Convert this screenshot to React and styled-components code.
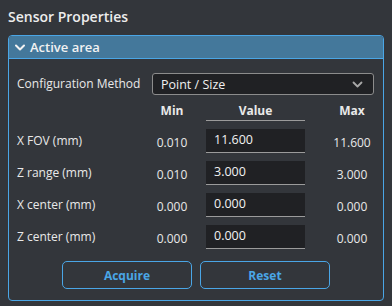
import React from 'react';
import styled, { createGlobalStyle } from 'styled-components';

const GlobalStyle = createGlobalStyle`
    html, body {
        margin: 0;
        padding: 0;
        background: #33363b;
    }
    body {
        font-family: "Open Sans", "Noto Sans", sans-serif;
        color: #e9e9e9;
    }
`;

const Page = styled.div`
    width: 392px;
    height: 306px;
    padding: 8px 8px 0 8px;
    box-sizing: border-box;
    background: #33363b;
`;

const Title = styled.h1`
    margin: 0;
    height: 27px;
    font-size: 14px;
    font-weight: 600;
    line-height: 18px;
    color: #ededed;
`;

const Panel = styled.section`
    width: 376px;
    height: 266px;
    box-sizing: border-box;
    border: 1px solid #4aa6e6;
    border-radius: 4px;
    overflow: hidden;
`;

const PanelHeader = styled.div`
    display: flex;
    align-items: center;
    gap: 5px;
    height: 22px;
    padding-left: 6px;
    background: #44789b;
    border-bottom: 1px solid #4aa6e6;
    font-size: 13px;
    font-weight: 600;
    color: #f2f2f2;
`;

const Body = styled.div`
    padding: 14px 0 0 8px;
`;

const ConfigRow = styled.div`
    display: flex;
    align-items: center;
    height: 22px;
`;

const Label = styled.div`
    flex: 0 0 135px;
    font-size: 12px;
    line-height: 16px;
`;

const Select = styled.div`
    display: flex;
    align-items: center;
    justify-content: space-between;
    flex: 0 0 222px;
    height: 22px;
    box-sizing: border-box;
    padding: 0 10px 0 8px;
    background: #202124;
    border: 1px solid #8c8c8c;
    border-radius: 3px;
    font-size: 12.5px;
    color: #f0f0f0;
`;

const Row = styled.div`
    display: flex;
    align-items: center;
    height: ${(p) => p.$height || 24}px;
    margin-top: ${(p) => p.$gap || 8}px;
`;

const MinCell = styled.div`
    flex: 0 0 40px;
    margin-right: 14px;
    text-align: center;
    font-size: 12px;
    font-weight: ${(p) => (p.$bold ? 700 : 400)};
    padding-top: ${(p) => (p.$bold ? 0 : 2)}px;
`;

const ValueHead = styled.div`
    flex: 0 0 99px;
    height: 20px;
    line-height: 22px;
    text-align: center;
    font-size: 12px;
    font-weight: 700;
    border-bottom: 1px solid #9b9b9b;
`;

const Input = styled.div`
    flex: 0 0 99px;
    height: 24px;
    box-sizing: border-box;
    padding: 0 8px;
    line-height: 22px;
    background: #202124;
    border-bottom: 1px solid #9b9b9b;
    font-size: 12.5px;
    color: #f2f2f2;
`;

const MaxCell = styled.div`
    flex: 0 0 60px;
    margin-left: 17px;
    text-align: center;
    font-size: 12px;
    font-weight: ${(p) => (p.$bold ? 700 : 400)};
    padding-top: ${(p) => (p.$bold ? 0 : 2)}px;
`;

const Buttons = styled.div`
    display: flex;
    gap: 8px;
    margin-top: 12px;
    padding-left: 45px;
`;

const Button = styled.button`
    width: 130px;
    height: 28px;
    background: transparent;
    border: 1px solid #4aa6e6;
    border-radius: 5px;
    color: #4aa6e6;
    font-family: "Open Sans", "Noto Sans", sans-serif;
    font-size: 12px;
    font-weight: 700;
    cursor: pointer;
`;

const Chevron = ({ color, width = 10, stroke = 2 }) => (
    <svg width={width} height="7" viewBox="0 0 10 7" fill="none">
        <path d="M1 1.5 L5 5.5 L9 1.5" stroke={color} strokeWidth={stroke} strokeLinecap="round" strokeLinejoin="round" />
    </svg>
);

const fields = [
    { label: 'X FOV (mm)', min: '0.010', value: '11.600', max: '11.600' },
    { label: 'Z range (mm)', min: '0.010', value: '3.000', max: '3.000' },
    { label: 'X center (mm)', min: '0.000', value: '0.000', max: '0.000' },
    { label: 'Z center (mm)', min: '0.000', value: '0.000', max: '0.000' },
];

const App = () => {
    return (
        <Page>
            <GlobalStyle />
            <Title>Sensor Properties</Title>
            <Panel>
                <PanelHeader>
                    <Chevron color="#f2f2f2" />
                    Active area
                </PanelHeader>
                <Body>
                    <ConfigRow>
                        <Label>Configuration Method</Label>
                        <Select>
                            Point / Size
                            <Chevron color="#a8a8a8" width={11} stroke={1.8} />
                        </Select>
                    </ConfigRow>
                    <Row $height={21} $gap={5}>
                        <Label />
                        <MinCell $bold>Min</MinCell>
                        <ValueHead>Value</ValueHead>
                        <MaxCell $bold>Max</MaxCell>
                    </Row>
                    {fields.map((f) => (
                        <Row key={f.label}>
                            <Label>{f.label}</Label>
                            <MinCell>{f.min}</MinCell>
                            <Input>{f.value}</Input>
                            <MaxCell>{f.max}</MaxCell>
                        </Row>
                    ))}
                    <Buttons>
                        <Button>Acquire</Button>
                        <Button>Reset</Button>
                    </Buttons>
                </Body>
            </Panel>
        </Page>
    );
};

export default App;
